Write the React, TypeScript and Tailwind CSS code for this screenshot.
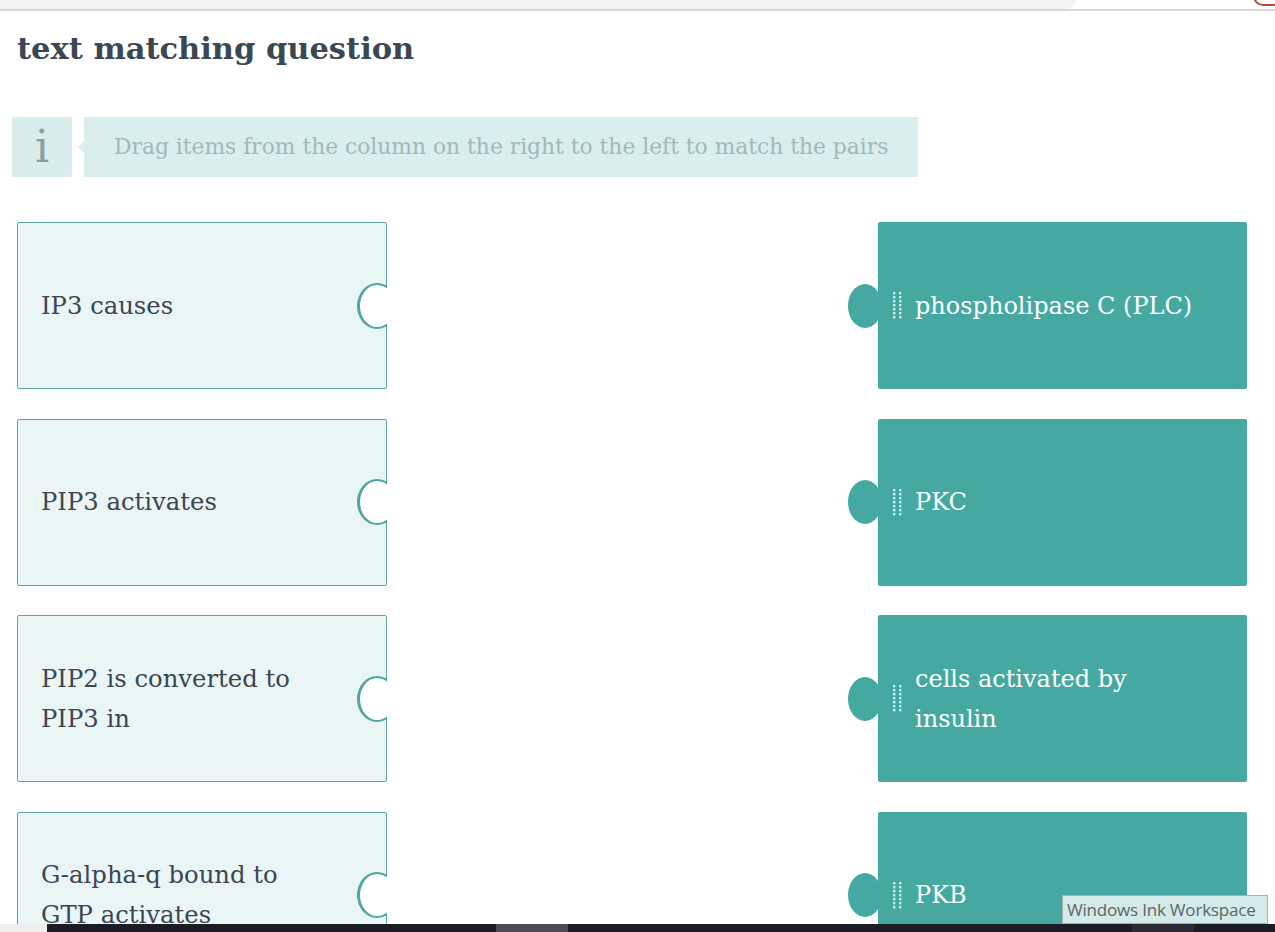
import React from "react";

type Pair = { left: string[]; right: string[] };

const pairs: Pair[] = [
  { left: ["IP3 causes"], right: ["phospholipase C (PLC)"] },
  { left: ["PIP3 activates"], right: ["PKC"] },
  { left: ["PIP2 is converted to", "PIP3 in"], right: ["cells activated by", "insulin"] },
  { left: ["G-alpha-q bound to", "GTP activates"], right: ["PKB"] },
];

function DragHandle() {
  const dots = [];
  for (let r = 0; r < 7; r++) {
    dots.push(<rect key={`a${r}`} x={0} y={r * 4} width={2.4} height={2.4} fill="#cdeae6" />);
    dots.push(<rect key={`b${r}`} x={6} y={r * 4} width={2.4} height={2.4} fill="#cdeae6" />);
  }
  return (
    <svg width="9" height="27" viewBox="0 0 9 27" className="shrink-0">
      {dots}
    </svg>
  );
}

function LeftCard({ lines }: { lines: string[] }) {
  return (
    <div className="relative flex h-[167px] w-[370px] items-center rounded-[2px] border border-[#5ea7a1] bg-[#eaf5f6] pl-[23px]">
      <div className="text-[24.3px] leading-[40px] text-[#3b4650]">
        {lines.map((l) => (
          <div key={l}>{l}</div>
        ))}
      </div>
      {/* socket cut into right edge */}
      <div className="absolute right-[-1px] top-1/2 h-[46px] w-[30px] -translate-y-1/2 overflow-hidden">
        <div className="h-[46px] w-[40px] rounded-[50%] border-2 border-l-[3px] border-[#4fa59f] bg-white" />
      </div>
    </div>
  );
}

function RightCard({ lines }: { lines: string[] }) {
  return (
    <div className="relative flex h-[167px] w-[369px] items-center rounded-[2px] bg-[#45a9a2] pl-[15px]">
      <div className="absolute left-[-30px] top-1/2 h-[44px] w-[34px] -translate-y-1/2 rounded-[50%] bg-[#45a9a2]" />
      <DragHandle />
      <div className="ml-[13px] text-[24px] leading-[40px] text-white">
        {lines.map((l) => (
          <div key={l}>{l}</div>
        ))}
      </div>
    </div>
  );
}

export default function App() {
  return (
    <div className="relative h-[932px] w-[1275px] overflow-hidden bg-white font-['DejaVu_Serif',serif]">
      {/* browser chrome remnant */}
      <div className="relative h-[11px] border-b-2 border-[#d8d8d8]">
        <div className="h-[9px] w-[1076px] rounded-br-[10px] bg-[#f3f3f3]" />
        <div className="absolute right-[-8px] top-[-14px] h-[20px] w-[30px] rounded-full border-2 border-[#b14a43]" />
      </div>

      <div className="px-[12px]">
        <h1 className="ml-[5px] mt-[17px] text-[30.5px] font-bold leading-[40px] text-[#3b4853]">
          text matching question
        </h1>

        <div className="mt-[49px] flex items-stretch">
          <div className="flex h-[60px] w-[60px] items-center justify-center rounded-[2px] bg-[#d9eded] text-[44px] text-[#8d9e9c]">
            i
          </div>
          <div className="relative ml-[12px] flex h-[60px] w-[834px] items-center bg-[#daeeee] pl-[30px]">
            <div className="absolute left-[-6px] top-1/2 h-0 w-0 -translate-y-1/2 border-y-[6px] border-r-[6px] border-y-transparent border-r-[#daeeee]" />
            <span className="text-[21.8px] font-light text-[#a3b8b7]">
              Drag items from the column on the right to the left to match the pairs
            </span>
          </div>
        </div>

        <div className="ml-[5px] mt-[45px] flex w-[1230px] flex-col gap-[29.5px]">
          {pairs.map((p, i) => (
            <div key={i} className="flex justify-between">
              <LeftCard lines={p.left} />
              <RightCard lines={p.right} />
            </div>
          ))}
        </div>
      </div>

      {/* tooltip overlay */}
      <div className="absolute left-[1062px] top-[895px] flex h-[29px] w-[206px] items-center border border-[#a9b0b0] bg-[#d3eae9] pl-[4px] font-['Open_Sans',sans-serif] text-[17px] tracking-[-0.2px] text-[#5a6767]">
        Windows Ink Workspace
      </div>

      {/* taskbar */}
      <div className="absolute bottom-0 left-0 flex h-[8px] w-full">
        <div className="w-[47px] bg-[#efefef]" />
        <div className="relative flex-1 bg-[#1c1c27]">
          <div className="absolute left-[449px] top-0 h-full w-[72px] bg-[#4b4b55]" />
          <div className="absolute left-[1085px] top-0 h-full w-[62px] bg-[#2a2a34]" />
        </div>
      </div>
    </div>
  );
}
